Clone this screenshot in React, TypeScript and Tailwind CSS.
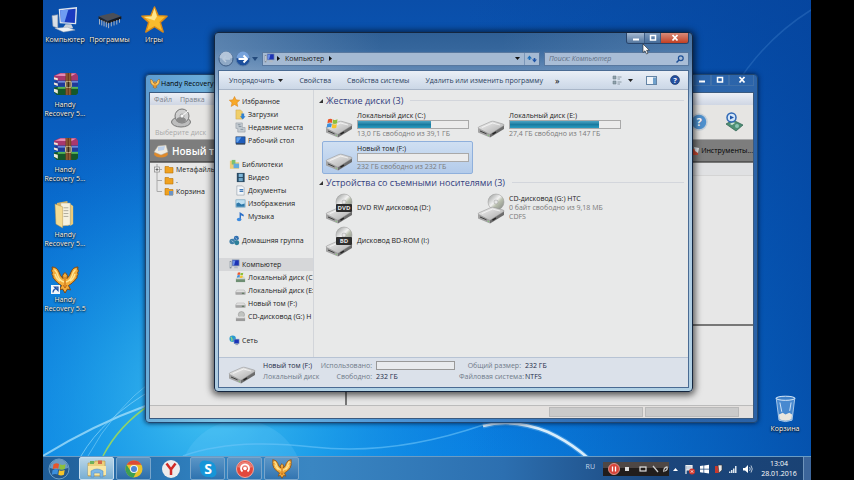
import React, { useState } from 'react';

const favorites = [
  { name: 'Избранное', icon: 'star', root: true },
  { name: 'Загрузки', icon: 'downloads' },
  { name: 'Недавние места', icon: 'recent' },
  { name: 'Рабочий стол', icon: 'desktop' },
];

const libraries = [
  { name: 'Библиотеки', icon: 'library', root: true },
  { name: 'Видео', icon: 'video' },
  { name: 'Документы', icon: 'document' },
  { name: 'Изображения', icon: 'image' },
  { name: 'Музыка', icon: 'music' },
];

const computer = [
  { name: 'Компьютер', icon: 'computer', root: true, active: true },
  { name: 'Локальный диск (C', icon: 'sysdrive' },
  { name: 'Локальный диск (E:', icon: 'drive' },
  { name: 'Новый том (F:)', icon: 'drive' },
  { name: 'CD-дисковод (G:) H', icon: 'cd' },
];

const navGroups = [
  favorites,
  libraries,
  [{ name: 'Домашняя группа', icon: 'homegroup', root: true }],
  computer,
  [{ name: 'Сеть', icon: 'network', root: true }],
];

const hardDisks = [
  { name: 'Локальный диск (C:)', used: 66, info: '13,0 ГБ свободно из 39,1 ГБ', system: true },
  { name: 'Локальный диск (E:)', used: 81, info: '27,4 ГБ свободно из 147 ГБ' },
  { name: 'Новый том (F:)', used: 0, info: '232 ГБ свободно из 232 ГБ' },
];

const removable = [
  { name: 'DVD RW дисковод (D:)', disc: 'DVD' },
  { name: 'CD-дисковод (G:) HTC', disc: ' ', info: '0 байт свободно из 9,18 МБ', fs: 'CDFS' },
  { name: 'Дисковод BD-ROM (I:)', disc: 'BD' },
];

function Flag() {
  return (
    <g>
      <path d="M0 1.5Q2.5 0 4.6 1.2L4 5.2Q2 4.2-.6 5.6Z" fill="#e8552a" />
      <path d="M5.3 1.5Q7.5 2.6 10 1.4L9.4 5.4Q7 6.6 4.7 5.5Z" fill="#8cc03c" />
      <path d="M-.8 6.4Q1.8 5 3.9 6.1L3.3 10Q1.2 9-1.4 10.3Z" fill="#3c8fdc" />
      <path d="M4.6 6.4Q7 7.5 9.3 6.3L8.7 10.2Q6.400 11.400 4 10.300Z" fill="#f7c52b" />
    </g>
  );
}

function DriveIcon({ system, disc }: { system?: boolean; disc?: string }) {
  return (
    <svg viewBox="0 0 30 32" className="h-8 w-[30px] shrink-0" aria-hidden="true">
      <defs>
        <linearGradient id="driveTop" x1="0" y1="0" x2="1" y2="1">
          <stop offset="0" stopColor="#f4f4f4" />
          <stop offset="1" stopColor="#a9a9a9" />
        </linearGradient>
        <linearGradient id="discFace" x1="0" y1="0" x2="1" y2="1">
          <stop offset="0" stopColor="#8f9290" />
          <stop offset=".45" stopColor="#f2f2f2" />
          <stop offset=".6" stopColor="#b9bfae" />
          <stop offset="1" stopColor="#7f8280" />
        </linearGradient>
      </defs>
      {disc && (
        <g>
          <circle cx="20" cy="10" r="8" fill="url(#discFace)" stroke="#989898" strokeWidth=".5" />
          <circle cx="20" cy="10" r="2" fill="#e6e6e6" stroke="#888" strokeWidth=".4" />
        </g>
      )}
      <path d="M2 22L14 27.500V31.500L2 26.500Z" fill="#a3a3a3" />
      <path d="M14 27.500L28 19V23L14 31.500Z" fill="#6c6c6c" />
      <path d="M2 22Q2 21.300 3 20.800L15 15.500Q16.500 15 18 15.400L27 18Q28.500 18.600 28 19.500L14.500 28Q14 28.300 13 28Z" fill="url(#driveTop)" stroke="#8b8b8b" strokeWidth=".5" />
      <path d="M6 21.500L16.500 17L24 19" fill="none" stroke="#fff" strokeWidth=".8" opacity=".8" />
      <path d="M4 25L10.500 27.800" stroke="#3f3f3f" strokeWidth="1" />
      <path d="M16.500 28.200L20 26" stroke="#222" strokeWidth="1.400" />
      <circle cx="12.300" cy="29.300" r=".6" fill="#7fd070" />
      {system && <g transform="translate(4 12) scale(.95)"><Flag /></g>}
      {disc && disc !== ' ' && (
        <g>
          <rect x="12" y="12" width="16" height="8" rx="1" fill="#2d2d2d" />
          <text x="20" y="18.300" textAnchor="middle" fontSize="6" fontWeight="700" fill="#e6e6e6">{disc}</text>
        </g>
      )}
    </svg>
  );
}

function NavIcon({ name }: { name: string }) {
  return (
    <svg viewBox="0 0 12 12" className="h-[11px] w-[11px] shrink-0" aria-hidden="true">
      {name === 'star' && <path d="M6 .5L7.700 4.200L11.700 4.600L8.700 7.400L9.600 11.400L6 9.300L2.400 11.400L3.300 7.400L.3 4.600L4.300 4.200Z" fill="#f8a928" stroke="#d9821a" strokeWidth=".6" />}
      {name === 'downloads' && <g><path d="M1 1H6L8 3V11H1Z" fill="#f0cf6a" stroke="#c8a040" strokeWidth=".5" /><path d="M7 5H10V8H11.500L8.500 11.500L5.500 8H7Z" fill="#2f7fd0" /></g>}
      {name === 'recent' && <g><path d="M1 1H8V6H11V11H3V7H1Z" fill="#c5ccd2" stroke="#8d979f" strokeWidth=".6" /><path d="M3 3H6M4 5H7M6 8H9" stroke="#6f7f8c" strokeWidth=".8" /></g>}
      {name === 'desktop' && <g><rect x="1" y="2" width="10" height="7.500" fill="#1f5dbd" stroke="#10305f" strokeWidth=".6" /><path d="M1.500 2.500H7L3 8H1.500Z" fill="#5fa0ea" /><rect x="1" y="9" width="10" height="1.500" fill="#35465c" /></g>}
      {name === 'library' && <g><path d="M1 2H5L6 3.500H11V10.500H1Z" fill="#eccc76" /><rect x="3" y="1" width="4" height="5" fill="#7cc06e" /><rect x="5" y="5" width="6" height="5" fill="#62aadd" /></g>}
      {name === 'video' && <g><rect x="2" y="1" width="8.500" height="10" fill="#294a63" /><rect x="4" y="2" width="4.500" height="3.500" fill="#7eb6d8" /><rect x="4" y="6.500" width="4.500" height="3.500" fill="#6fa7c9" /></g>}
      {name === 'document' && <g><path d="M2 1H8L10 3V11H2Z" fill="#f2f5f8" stroke="#8a97a5" strokeWidth=".6" /><path d="M5 5H9M5 7H9" stroke="#447dbb" strokeWidth="1.200" /></g>}
      {name === 'image' && <g><rect x="1" y="2" width="10" height="8" fill="#bfe0f2" stroke="#5e95b5" strokeWidth=".6" /><path d="M1.500 9.500V6L4 5L7 7L10.500 6V9.500Z" fill="#2d77a8" /></g>}
      {name === 'music' && <g><path d="M5 9V1L9.500 4V6L6.500 4.500V9.500Z" fill="#2a6fc8" /><ellipse cx="4.500" cy="9.300" rx="2.500" ry="1.900" fill="#3c8be0" /></g>}
      {name === 'homegroup' && <g><circle cx="3.500" cy="7" r="3" fill="#3f7fa8" /><circle cx="8" cy="3.500" r="2.700" fill="#2f6fb0" /><circle cx="8.500" cy="8.500" r="2.700" fill="#2d7f9a" /><path d="M3 6L5 8M7 3L9 5" stroke="#cfe4f0" strokeWidth=".8" /></g>}
      {name === 'computer' && <g><rect x="3.500" y="1" width="7.500" height="6.500" fill="#1c33b5" stroke="#8495aa" strokeWidth=".7" /><path d="M4 1.500H7L5.500 7H4Z" fill="#6a8fe6" /><path d="M6 8H9L10 10H5.500Z" fill="#b0b8c2" /><rect x="1" y="3" width="2" height="7" fill="#c2cad3" stroke="#7d8894" strokeWidth=".4" /></g>}
      {name === 'sysdrive' && <g><path d="M1 7H11V11H1Z" fill="#6f8f74" /><path d="M2 5H10L11 8H1Z" fill="#cfd5d0" /><g transform="translate(3 0) scale(.6)"><Flag /></g></g>}
      {name === 'drive' && <g><path d="M2 5.500H10L11.500 8H.5Z" fill="#e4e4e4" stroke="#999" strokeWidth=".4" /><rect x=".5" y="7.800" width="11" height="2.700" rx=".5" fill="#a5a5a5" /><rect x="7.500" y="8.500" width="2.500" height="1" fill="#4d6e4d" /></g>}
      {name === 'cd' && <g><circle cx="7" cy="4" r="3.400" fill="#c0c3c0" stroke="#888" strokeWidth=".5" /><path d="M1 7H11V11H1Z" fill="#9b9b9b" /><path d="M2 6H10L11 8H1Z" fill="#dedede" /></g>}
      {name === 'network' && <g><circle cx="4" cy="4" r="3.500" fill="#2a9ad0" /><path d="M2 2Q4 4 3 7" stroke="#a6e070" strokeWidth="1.200" fill="none" /><rect x="5.500" y="4.500" width="5.500" height="5" fill="#1a35b8" stroke="#8fa3c0" strokeWidth=".6" /><path d="M7 10H10V11H7Z" fill="#8894a4" /></g>}
    </svg>
  );
}

function Phoenix({ className }: { className: string }) {
  return (
    <svg viewBox="0 0 28 28" className={className} aria-hidden="true">
      <path d="M1 1Q6 1 8 6Q9 10 12 12.500Q11 9 12.500 8L14 6.500L15.500 8Q17 9 16 12.500Q19 10 20 6Q22 1 27 1Q26 3 27.500 5Q26 6 27 8.500Q25.500 9.500 26 12Q24 13 23.500 15Q21.500 16 20 18Q18.500 18.500 17.500 19.500L19.500 24L16.500 23L14 27L11.500 23L8.500 24L10.500 19.500Q9.500 18.500 8 18Q6.500 16 4.500 15Q4 13 2 12Q2.500 9.500 1 8.500Q2 6 .5 5Q2 3 1 1Z" fill="#f3ad3c" stroke="#84480f" strokeWidth="1" />
      <path d="M3.500 3.500Q6 6 7 10Q8.500 14.500 13 16M24.500 3.500Q22 6 21 10Q19.500 14.500 15 16M4 8Q5.500 13 9 15M24 8Q22.500 13 19 15" stroke="#ffe593" strokeWidth="1.500" fill="none" />
      <path d="M14 11V22M12 19L14 22L16 19" stroke="#c56a14" strokeWidth="1" fill="none" />
    </svg>
  );
}

function RarIcon() {
  return (
    <svg viewBox="0 0 28 26" className="h-[25px] w-[27px]" aria-hidden="true">
      <path d="M2 4L8 1H25L27 4V9H6L2 8Z" fill="#a8386e" />
      <path d="M3 4L9 1.500H25L20 4.500Z" fill="#e48bb4" />
      <path d="M2 10L6 9H27V15H6L2 14Z" fill="#203a98" />
      <path d="M6 9.500H27V11H6Z" fill="#7794e0" />
      <path d="M2 16L6 15.500H27V22L25 24H5L2 21Z" fill="#14582a" />
      <path d="M6 15.500H27V17.500H6Z" fill="#57b455" />
      <path d="M2 5.500L6 6.500V8.500L2 7.500ZM2 11L6 12V14.500L2 13ZM2 17.500L6 18.500V22.500L2 20.500Z" fill="#efe9da" />
      <path d="M14 1H20V24H14Z" fill="#6e3d20" />
      <path d="M15.500 1V24M18.500 1V24" stroke="#a87848" strokeWidth=".8" />
      <rect x="14" y="10" width="6" height="6" rx="1" fill="#7b6c54" stroke="#d3c294" strokeWidth="1" />
      <path d="M17 10V16" stroke="#3f2a15" strokeWidth="1.500" />
    </svg>
  );
}

function ComputerIcon() {
  return (
    <svg viewBox="0 0 30 28" className="h-[27px] w-[29px]" aria-hidden="true">
      <path d="M1 10L7 9V23L2 21Z" fill="#d9dfe6" stroke="#8f9bab" strokeWidth=".6" />
      <path d="M8 3L27 1L26 19L9 18Z" fill="#dfe6ee" />
      <path d="M9.500 4.500L25.500 2.800L24.700 17.500L10.300 16.500Z" fill="#1a3bc0" />
      <path d="M9.500 4.500L18 3.600L14 16.800L10.300 16.500Z" fill="#6f9cf2" />
      <path d="M15 19H21L23 23H12Z" fill="#c9d1da" />
      <path d="M4 23L17 22L25 25L13 27Z" fill="#eef2f6" stroke="#96a3b2" strokeWidth=".5" />
    </svg>
  );
}

function ChipIcon() {
  return (
    <svg viewBox="0 0 28 22" className="h-[20px] w-[27px]" aria-hidden="true">
      <path d="M2 7L18 3L27 7L12 12Z" fill="#4b4f57" />
      <path d="M2 7L12 12V15L2 10Z" fill="#23262b" />
      <path d="M12 12L27 7V10L12 15Z" fill="#17191d" />
      <path d="M3 10V16M5.500 11V17M8 12V18M10.500 13V19M13 14V20M16 13V18M19 12V17M22 11V16M25 10V14" stroke="#b5bcc6" strokeWidth="1" />
    </svg>
  );
}

function StarIcon() {
  return (
    <svg viewBox="0 0 30 30" className="h-[29px] w-[29px]" aria-hidden="true">
      <path d="M15 2L18.800 11L28 11.500L21 18L24 28L15 22.500L6 28L9 18L2 11.500L11.200 11Z" fill="#f9bb2d" stroke="#d98a18" strokeWidth="1.500" strokeLinejoin="round" />
      <path d="M15 3L17.500 12L15 16L4 12.500L12 12Z" fill="#ffe68c" />
    </svg>
  );
}

function FolderIcon() {
  return (
    <svg viewBox="0 0 24 30" className="h-[29px] w-[23px]" aria-hidden="true">
      <path d="M3 3L14 1L15 27L4 25Z" fill="#d9b565" />
      <path d="M7 3L17 3V26L8 27Z" fill="#f6f1df" stroke="#b3a172" strokeWidth=".5" />
      <path d="M10 8H15M10 11H15M10 14H15M10 17H15" stroke="#8d8a7d" strokeWidth=".7" />
      <path d="M1 4L9 7V29L2 25Z" fill="#f4dc94" stroke="#b8934a" strokeWidth=".5" />
      <path d="M17 4L20 6V25L17 27Z" fill="#ecca78" />
    </svg>
  );
}

function BinIcon() {
  return (
    <svg viewBox="0 0 24 30" className="h-[28px] w-[23px]" aria-hidden="true">
      <path d="M2 3H22L19 27Q12 30 5 27Z" fill="#7fb4ea" fillOpacity=".55" stroke="#cfe3f6" strokeWidth=".8" />
      <ellipse cx="12" cy="3.500" rx="10" ry="2.200" fill="#3c7fc8" stroke="#e4f0fb" strokeWidth="1" />
      <path d="M5 21L9 19L12 21L16 19L19 21L18.500 26Q12 29 5.500 26Z" fill="#e9e6de" />
      <path d="M6 8L8 18M18 8L16.500 17" stroke="#d6e8fa" strokeWidth="1" />
    </svg>
  );
}

function Shortcut({ label, children }: { label: string; children: React.ReactNode }) {
  return (
    <button type="button" className="flex w-full flex-col items-center text-center text-white">
      <span className="flex h-[31px] items-center justify-center">{children}</span>
      <span className="text-[7px] leading-[9px] [text-shadow:0_1px_2px_#000,0_0_1px_#000]">{label}</span>
    </button>
  );
}

function Wallpaper() {
  return (
    <svg viewBox="0 0 768 480" preserveAspectRatio="none" className="absolute inset-0 h-full w-full" aria-hidden="true">
      <defs>
        <linearGradient id="sky" x1="0" y1="0" x2="0" y2="1">
          <stop offset="0" stopColor="#0a4ea9" />
          <stop offset=".45" stopColor="#0868cd" />
          <stop offset="1" stopColor="#0a84e6" />
        </linearGradient>
        <radialGradient id="glow" cx="170" cy="400" r="300" gradientUnits="userSpaceOnUse">
          <stop offset="0" stopColor="#4fd0f4" stopOpacity=".85" />
          <stop offset=".4" stopColor="#27aeec" stopOpacity=".6" />
          <stop offset="1" stopColor="#0a80dd" stopOpacity="0" />
        </radialGradient>
        <linearGradient id="shade" x1="0" y1="0" x2="1" y2="0">
          <stop offset=".55" stopColor="#04489f" stopOpacity="0" />
          <stop offset="1" stopColor="#04439c" stopOpacity=".75" />
        </linearGradient>
      </defs>
      <rect width="768" height="480" fill="url(#sky)" />
      <rect width="768" height="480" fill="url(#glow)" />
      <rect width="768" height="480" fill="url(#shade)" />
      <circle cx="198" cy="482" r="62" fill="#7fd4ff" opacity=".18" />
      <path d="M0 456Q50 425 105 405T200 340" stroke="#a9e2fb" strokeWidth="2" fill="none" opacity=".75" />
      <path d="M38 456Q60 418 112 388" stroke="#7fd0f7" strokeWidth="1" fill="none" opacity=".8" />
      <path d="M45 456Q70 410 110 380" stroke="#7fd0f7" strokeWidth="1" fill="none" opacity=".6" />
      <path d="M60 456Q76 425 108 404" stroke="#8fd36a" strokeWidth="1.500" fill="none" />
      <path d="M140 456Q190 438 270 447T440 425" stroke="#6cc4f8" strokeWidth="1.500" fill="none" opacity=".6" />
      <path d="M440 426Q470 418 505 432Q545 450 572 490" stroke="#7cc4f6" strokeWidth="5" fill="none" opacity=".4" />
      <path d="M440 426Q470 418 505 432Q540 448 566 480" stroke="#eaf7ff" strokeWidth="2.500" fill="none" opacity=".9" />
      <path d="M768 10Q720 40 690 90" stroke="#5c9ae0" strokeWidth="1.500" fill="none" opacity=".25" />
    </svg>
  );
}

function RecoveryWindow() {
  return (
    <section className="absolute bottom-[33px] left-[102px] right-[53px] top-[74px] flex flex-col rounded-[4px] border border-[#21466f] bg-[linear-gradient(100deg,#5c9bd0_0%,#7dc3e4_20%,#4f97d8_45%,#2c66ad_80%,#2b62a6_100%)] px-[3px] pb-[3px] text-[7px] leading-[9px] text-[#222] shadow-[0_0_5px_#001a40]">
      <header className="flex h-[17px] shrink-0 items-center gap-px pl-px">
        <Phoenix className="h-[10px] w-[10px]" />
        <h2 className="flex-1 text-black">Handy Recovery</h2>
        <div className="flex h-full items-start text-white">
          {['min', 'max', 'close'].map((b) => (
            <button key={b} type="button" aria-label={b} className="flex h-[11px] w-[18px] items-center justify-center border-x border-b border-[#3f70aa] last:w-[25px]">
              <ControlGlyph name={b} />
            </button>
          ))}
        </div>
      </header>
      <div className="flex min-h-0 flex-1 flex-col border border-[#3a5a80] bg-[#e7e7e7]">
        <nav className="flex h-3 shrink-0 items-center gap-2 bg-linear-to-b from-[#eceff6] to-[#cfd6e4] px-1 text-[#7b7f88]">
          <button type="button">Файл</button>
          <button type="button">Правка</button>
        </nav>
        <div className="flex h-[35px] shrink-0 items-center justify-between border-b border-[#aaa] bg-[#e6e5e3] pl-[5px] pr-[9px]">
          <button type="button" className="flex flex-col items-center text-[#a9a9a9]">
            <svg viewBox="0 0 22 20" className="h-5 w-[22px]" aria-hidden="true">
              <ellipse cx="11" cy="14" rx="9.500" ry="5" fill="#bdbdbd" stroke="#777" />
              <circle cx="12" cy="8" r="7" fill="#cfcfcf" stroke="#777" />
              <ellipse cx="11" cy="12" rx="5" ry="3" fill="#8a8a8a" />
              <circle cx="12" cy="8" r="2" fill="#f5f5f5" stroke="#777" strokeWidth=".6" />
              <path d="M12 8L18 3" stroke="#fff" />
            </svg>
            Выберите диск
          </button>
          <div className="flex items-center gap-4">
            <button type="button" aria-label="Справка">
              <svg viewBox="0 0 18 18" className="h-[18px] w-[18px]" aria-hidden="true">
                <circle cx="9" cy="9" r="8" fill="#4f90cd" stroke="#c6cfd8" strokeWidth="1.500" />
                <text x="9" y="13" textAnchor="middle" fontSize="11" fontWeight="700" fill="#fff">?</text>
              </svg>
            </button>
            <button type="button" aria-label="Обновление">
              <svg viewBox="0 0 20 20" className="h-[20px] w-[20px]" aria-hidden="true">
                <path d="M2 12L9 8L19 13L12 19Z" fill="#4e8f73" stroke="#2b5e50" strokeWidth=".7" />
                <path d="M6 12L9 10L11 11L8 13Z" fill="#d2e6d8" />
                <circle cx="13" cy="14" r="2" fill="#8cc5b5" />
                <circle cx="7.500" cy="5.500" r="4.500" fill="#d3e5f8" stroke="#3068b5" strokeWidth="1.500" />
                <path d="M6 3.500L10 5.500L6 7.500Z" fill="#1f55a8" />
              </svg>
            </button>
          </div>
        </div>
        <div className="flex h-[22px] shrink-0 items-center justify-between border-b border-[#555] bg-[#7d7d7d] pl-[3px]">
          <span className="flex items-center gap-[3px] text-[10px] leading-[14px] font-semibold text-white">
            <svg viewBox="0 0 16 14" className="h-[14px] w-4" aria-hidden="true">
              <ellipse cx="8" cy="10" rx="7" ry="3.500" fill="#e08a2a" />
              <path d="M1 8L5 2L13 1L15 8L8 11Z" fill="#eeeae0" stroke="#a9a294" strokeWidth=".5" />
              <path d="M5 3L12 2L11 6L5 7Z" fill="#bcd0ea" />
            </svg>
            Новый том (F:)
          </span>
          <button type="button" className="flex items-center text-black">
            <svg viewBox="0 0 10 10" className="h-[10px] w-[10px]" aria-hidden="true">
              <rect x="1" y="3" width="6" height="6" fill="#cf4a33" />
              <path d="M3 1L8 2L7 7L4 5Z" fill="#e9edf3" />
            </svg>
            Инструменты...
          </button>
        </div>
        <div className="flex min-h-0 flex-1 border-t border-[#777]">
          <ul className="w-[197px] shrink-0 border-r-2 border-[#777] pl-1 pt-px">
            {['Метафайлы', '.', 'Корзина'].map((item, i) => (
              <li key={item} className="flex h-[11px] items-center gap-[2px]">
                <svg viewBox="0 0 8 11" className="h-[11px] w-2" aria-hidden="true">
                  <path d={i === 2 ? 'M3 0V5.500H8' : 'M3 0V11M3 5.500H8'} stroke="#aaa" strokeWidth="1" fill="none" />
                  {i === 0 && <g><rect x=".5" y="3" width="5" height="5" fill="#eee" stroke="#888" strokeWidth=".7" /><path d="M1.500 5.500H4.500M3 4V7" stroke="#444" strokeWidth=".7" /></g>}
                </svg>
                <svg viewBox="0 0 10 9" className="h-[9px] w-[10px]" aria-hidden="true">
                  <path d="M1 1.500H4.500L5.500 2.500H9V8H1Z" fill="#f0a11e" stroke="#b8730c" strokeWidth=".6" />
                  {i === 2 && <rect x="5" y="4" width="4" height="4.500" fill="#6c93c4" />}
                </svg>
                {item}
              </li>
            ))}
          </ul>
          <div className="flex flex-1 flex-col">
            <div className="h-[13px] border-b border-[#d4d4d4] bg-[#e0e1e3]" />
            <div className="h-[150px] border-b-2 border-[#777]" />
          </div>
        </div>
        <footer className="flex h-[13px] shrink-0 items-center justify-end gap-[2px] border-t border-[#bbb] bg-[#e3e0de] pr-[14px]">
          <span className="h-[10px] w-[94px] border border-[#b9b9b9] bg-[#cacaca]" />
          <span className="h-[10px] w-[94px] border border-[#b9b9b9] bg-[#cacaca]" />
        </footer>
      </div>
    </section>
  );
}

function ControlGlyph({ name }: { name: string }) {
  return (
    <svg viewBox="0 0 8 8" className="h-2 w-2" fill="none" stroke="#fff" aria-hidden="true">
      {name === 'min' && <path d="M1 5.500H7" strokeWidth="2" />}
      {name === 'max' && <rect x="1.500" y="1.500" width="5" height="4.500" strokeWidth="1.500" />}
      {name === 'close' && <path d="M1.500 1L6.500 6.500M6.500 1L1.500 6.500" strokeWidth="1.800" />}
    </svg>
  );
}

function GroupTitle({ children }: { children: React.ReactNode }) {
  return (
    <h3 className="flex h-[15px] items-center gap-[3px] text-[9px] leading-[15px] text-[#34417f]">
      <svg viewBox="0 0 5 5" className="-ml-[3px] h-1 w-1" aria-hidden="true"><path d="M5 0V5H0Z" fill="#333" /></svg>
      {children}
      <span className="ml-1 h-px flex-1 bg-[#d3d6dc]" />
    </h3>
  );
}

function Tile({ item, selected, onSelect }) {
  const tileClass = selected
    ? 'border-[#8fb0dc] bg-linear-to-b from-[#cfdff2] to-[#b3cbea]'
    : 'border-transparent';
  return (
    <button type="button" onClick={onSelect} className={`flex h-[33px] w-[151px] items-center gap-[3px] rounded-[2px] border pl-px text-left ${tileClass}`}>
      <span className={item.disc ? '' : '-mt-[5px]'}>
        <DriveIcon system={item.system} disc={item.disc} />
      </span>
      <span className="min-w-0 whitespace-nowrap">
        <span className="block text-[#222]">{item.name}</span>
        {item.used !== undefined && (
          <span className="block h-[9px] w-[112px] border border-[#a9a9a9] bg-[#ececec]">
            <span className="block h-full bg-linear-to-b from-[#4aa5c4] via-[#1a7ba0] to-[#2b9cc0]" style={{ width: `${item.used}%` }} />
          </span>
        )}
        {item.info && <span className="block text-[#7a7a7a]">{item.info}</span>}
        {item.fs && <span className="block text-[#7a7a7a]">{item.fs}</span>}
      </span>
    </button>
  );
}

function ExplorerWindow() {
  const [selected, setSelected] = useState('Новый том (F:)');
  const [query, setQuery] = useState('');

  return (
    <section className="absolute bottom-[64px] left-[171px] right-[118px] top-[32px] flex flex-col rounded-[4px] border border-[#14263f] bg-[linear-gradient(90deg,#a9c0d855_0%,#1b4f8a00_35%,#1b4f8a00_60%,#a9c0d833_100%),linear-gradient(180deg,#2f5f95_0px,#35669c_16px,#6289b5_38px,#a7c6e2_70px,#b2d3e6_100%)] px-[3px] pb-[3px] text-[7px] leading-[9px] shadow-[0_1px_7px_2px_#000a]">
      <header className="flex h-[15px] shrink-0 justify-end">
        <div className="flex h-[11px] overflow-hidden rounded-b-[3px] border border-t-0 border-[#29446a]">
          <button type="button" aria-label="Свернуть" className="flex w-[17px] items-center justify-center bg-linear-to-b from-[#a4b8d0] to-[#54779f]"><ControlGlyph name="min" /></button>
          <button type="button" aria-label="Развернуть" className="flex w-[17px] items-center justify-center border-x border-[#3c5c85] bg-linear-to-b from-[#7c99bc] to-[#456c9a]"><ControlGlyph name="max" /></button>
          <button type="button" aria-label="Закрыть" className="flex w-[27px] items-center justify-center bg-linear-to-b from-[#d88a78] to-[#c23e20]"><ControlGlyph name="close" /></button>
        </div>
      </header>
      <div className="flex h-[22px] shrink-0 items-center gap-1 pb-px">
        <div className="flex items-center gap-px">
          <button type="button" aria-label="Назад">
            <svg viewBox="0 0 16 16" className="h-4 w-4" aria-hidden="true">
              <circle cx="8" cy="8" r="7" fill="#8fa9c6" stroke="#3d5c84" />
              <path d="M1.500 7Q8 9 14.500 7A6.500 6.500 0 0 0 1.500 7Z" fill="#b3c5da" />
              <path d="M12 8H5M8 5L5 8L8 11" stroke="#b9cadd" strokeWidth="1.500" fill="none" />
            </svg>
          </button>
          <button type="button" aria-label="Вперёд">
            <svg viewBox="0 0 16 16" className="h-4 w-4" aria-hidden="true">
              <circle cx="8" cy="8" r="7" fill="#1c4f9c" stroke="#5c7ea8" />
              <path d="M1.500 7Q8 9 14.500 7A6.500 6.500 0 0 0 1.500 7Z" fill="#77a3dc" />
              <path d="M3.500 8H12M8.500 4.500L12 8L8.500 11.500" stroke="#fff" strokeWidth="2" fill="none" />
            </svg>
          </button>
          <svg viewBox="0 0 6 4" className="h-1 w-[6px]" aria-hidden="true"><path d="M0 0H6L3 4Z" fill="#234a7c" /></svg>
        </div>
        <div className="flex h-[14px] flex-1 items-center border border-[#58789f] bg-[#a5bad3] pl-px text-[#1b1b1b]">
          <NavIcon name="computer" />
          <button type="button" className="flex flex-1 items-center gap-[5px] pl-[2px]">
            <Arrow /> Компьютер <Arrow />
          </button>
          <button type="button" aria-label="Предыдущие расположения" className="px-1">
            <svg viewBox="0 0 5 3" className="h-[3px] w-[5px]" aria-hidden="true"><path d="M0 0H5L2.500 3Z" fill="#111" /></svg>
          </button>
          <button type="button" aria-label="Обновить" className="flex h-full w-[15px] items-center justify-center border-l border-[#7b97b9]">
            <svg viewBox="0 0 10 8" className="h-2 w-[10px]" aria-hidden="true">
              <path d="M0 3.500L2.500 .5L5 3.500H3.300V5H1.700V3.500Z" fill="#1f6fb8" />
              <path d="M5 4.500H6.700V3H8.300V4.500H10L7.500 7.500Z" fill="#1f55a8" />
            </svg>
          </button>
        </div>
        <label className="flex h-[14px] w-[145px] items-center border border-[#58789f] bg-[#a9bdd6] px-1">
          <input
            type="text"
            name="search"
            aria-label="Поиск"
            placeholder="Поиск: Компьютер"
            value={query}
            onChange={(event) => setQuery(event.target.value)}
            className="min-w-0 flex-1 bg-transparent italic outline-none placeholder:text-[#5f6f84]"
          />
          <svg viewBox="0 0 8 8" className="h-2 w-2" fill="none" stroke="#1d4f96" aria-hidden="true">
            <circle cx="4.800" cy="3.200" r="2.400" strokeWidth="1.200" />
            <path d="M3 5L.5 7.500" strokeWidth="1.500" />
          </svg>
        </label>
      </div>
      <div className="flex min-h-0 flex-1 flex-col border border-[#4a6b93] bg-[#e8e9e9]">
        <div className="flex h-[19px] shrink-0 items-center border-b border-[#a9b6c8] bg-linear-to-b from-[#eaeff6] via-[#dae3ef] to-[#cbd7e6] pl-[10px] pr-2 text-[#2b3f60]">
          <button type="button" className="flex items-center gap-1">
            Упорядочить
            <svg viewBox="0 0 5 3" className="h-[3px] w-[5px]" aria-hidden="true"><path d="M0 0H5L2.500 3Z" fill="#222" /></svg>
          </button>
          <button type="button" className="ml-4">Свойства</button>
          <button type="button" className="ml-4">Свойства системы</button>
          <button type="button" className="ml-4">Удалить или изменить программу</button>
          <button type="button" aria-label="Ещё" className="ml-3 text-[9px] text-black">»</button>
          <div className="ml-auto flex items-center gap-[13px]">
            <button type="button" aria-label="Изменить представление" className="flex items-center gap-[6px]">
              <svg viewBox="0 0 10 10" className="h-[10px] w-[10px]" aria-hidden="true">
                <path d="M1 1H4V4H1ZM1 6H4V9H1Z" fill="#8fa2ad" stroke="#65757f" strokeWidth=".5" />
                <path d="M5.500 2H9.500M5.500 4H8M5.500 7H9.500M5.500 9H8" stroke="#7b8a94" strokeWidth=".8" />
              </svg>
              <svg viewBox="0 0 5 3" className="h-[3px] w-[5px]" aria-hidden="true"><path d="M0 0H5L2.500 3Z" fill="#222" /></svg>
            </button>
            <button type="button" aria-label="Область просмотра">
              <svg viewBox="0 0 11 9" className="h-[9px] w-[11px]" aria-hidden="true">
                <rect x=".5" y=".5" width="10" height="8" fill="#eff4f9" stroke="#6484a5" />
                <rect x="7" y="1.500" width="3" height="6.500" fill="#6fa0cb" />
              </svg>
            </button>
            <button type="button" aria-label="Справка">
              <svg viewBox="0 0 10 10" className="h-[10px] w-[10px]" aria-hidden="true">
                <circle cx="5" cy="5" r="4.500" fill="#244f9f" stroke="#14305f" strokeWidth=".6" />
                <text x="5" y="7.700" textAnchor="middle" fontSize="7.500" fontWeight="700" fill="#fff">?</text>
              </svg>
            </button>
          </div>
        </div>
        <div className="flex min-h-0 flex-1">
          <nav className="flex w-[95px] shrink-0 flex-col gap-[11px] overflow-hidden border-r border-[#d2d5da] pt-[5px] text-[#222]">
            {navGroups.map((group) => (
              <ul key={group[0].name}>
                {group.map((item: any) => (
                  <li key={item.name}>
                    <a
                      href="#"
                      className={`flex h-[13px] items-center gap-[2px] whitespace-nowrap ${item.root ? 'pl-[10px]' : 'pl-4'} ${item.active ? 'bg-[#d6d7d9]' : ''}`}
                    >
                      <NavIcon name={item.icon} />
                      {item.name}
                    </a>
                  </li>
                ))}
              </ul>
            ))}
          </nav>
          <main className="flex min-w-0 flex-1 flex-col gap-px pl-2 pr-1 pt-[3px]">
            <GroupTitle>Жесткие диски (3)</GroupTitle>
            <div className="-mt-px grid grid-cols-[152px_152px]">
              {hardDisks.map((d) => (
                <Tile key={d.name} item={d} selected={selected === d.name} onSelect={() => setSelected(d.name)} />
              ))}
            </div>
            <GroupTitle>Устройства со съемными носителями (3)</GroupTitle>
            <div className="grid grid-cols-[152px_152px]">
              {removable.map((d) => (
                <Tile key={d.name} item={d} selected={selected === d.name} onSelect={() => setSelected(d.name)} />
              ))}
            </div>
          </main>
        </div>
        <footer className="flex h-[30px] shrink-0 items-start gap-[6px] border-t border-[#b7c3d4] bg-[#dbe1ea] pl-2">
          <span className="-mt-[6px]">
            <DriveIcon />
          </span>
          <dl className="grid grid-cols-[50px_55px_79px_62px_auto] items-center gap-x-1 gap-y-[2px] whitespace-nowrap pt-[3px] text-[#6f7a89]">
            <dt className="text-[#1d2c48]">Новый том (F:)</dt>
            <dt className="text-right">Использовано:</dt>
            <dd className="h-[9px] border border-[#999] bg-[#e9ebee]" />
            <dt className="text-right">Общий размер:</dt>
            <dd className="text-[#1d2c48]">232 ГБ</dd>
            <dd>Локальный диск</dd>
            <dt className="text-right">Свободно:</dt>
            <dd className="text-[#1d2c48]">232 ГБ</dd>
            <dt className="text-right">Файловая система:</dt>
            <dd className="text-[#1d2c48]">NTFS</dd>
          </dl>
        </footer>
      </div>
    </section>
  );
}

function Arrow() {
  return (
    <svg viewBox="0 0 3 5" className="h-[5px] w-[3px]" aria-hidden="true">
      <path d="M0 0L3 2.500L0 5Z" fill="#111" />
    </svg>
  );
}

function TaskIcon({ name }: { name: string }) {
  if (name === 'Handy Recovery') return <Phoenix className="h-5 w-5" />;
  return (
    <svg viewBox="0 0 20 20" className="h-5 w-5" aria-hidden="true">
      {name === 'Проводник' && <g><path d="M1 4H7L8 2H18V17H1Z" fill="#ecd07c" stroke="#b89440" strokeWidth=".6" /><path d="M3 2H7V5H3Z" fill="#6fb15b" /><path d="M11 1.500H15V5H11Z" fill="#d46a4a" /><path d="M1 7H19V16H1Z" fill="#f8e6a4" /><path d="M4 18V12Q10 8 16 12V18H13V14H7V18Z" fill="#7db8e6" stroke="#4a85bd" strokeWidth=".5" /></g>}
      {name === 'Chrome' && <g><circle cx="10" cy="10" r="8.500" fill="#e8c22c" /><path d="M2.600 5.800A8.500 8.500 0 0 1 17.400 5.800H10Z" fill="#dc4a38" /><path d="M2.600 5.800A8.500 8.500 0 0 0 9.500 18.500L13 11.500L10 10L6.500 12Z" fill="#3c9f52" /><circle cx="10" cy="10" r="4" fill="#f2f2f2" /><circle cx="10" cy="10" r="3" fill="#4a86d8" /></g>}
      {name === 'Яндекс' && <g><circle cx="10" cy="10" r="9" fill="#ececec" /><path d="M5.500 4.500L10 10.500L14.500 4.500M10 10V16" stroke="#d02a26" strokeWidth="2.500" fill="none" /></g>}
      {name === 'Skype' && <g><circle cx="6.500" cy="6.500" r="5" fill="#1696d8" /><circle cx="13.500" cy="13.500" r="5" fill="#1696d8" /><circle cx="10" cy="10" r="8" fill="#1696d8" /><text x="10" y="15" textAnchor="middle" fontSize="14" fontWeight="700" fill="#fff">S</text></g>}
      {name === 'Запись' && <g><circle cx="10" cy="10" r="8.500" fill="#e2483c" stroke="#f3a79e" /><path d="M2.500 8Q10 11 17.500 8A8 8 0 0 0 2.500 8Z" fill="#f0958b" opacity=".7" /><path d="M7.500 12.500A4 4 0 1 1 12.500 12.500" fill="none" stroke="#fff" strokeWidth="1.800" /><circle cx="10" cy="9.500" r="1.800" fill="#fff" /></g>}
    </svg>
  );
}

const tasks = ['Проводник', 'Chrome', 'Яндекс', 'Skype', 'Запись', 'Handy Recovery'];

function taskClass(name: string) {
  if (name === 'Проводник') return 'border-[#c7dff0] bg-linear-to-b from-[#b9d6e8] to-[#78aed2]';
  if (name === 'Яндекс') return 'border-transparent';
  return 'border-[#78a5cb] bg-linear-to-b from-[#6d9fca]/70 to-[#2d6aa6]/60';
}

function Taskbar() {
  return (
    <footer className="relative flex h-6 shrink-0 items-center border-t border-[#6b9cc4] bg-[linear-gradient(90deg,#1f5c96_0%,#2f7fbd_20%,#3a86c2_35%,#2c6fb0_60%,#1b467c_80%,#1a4274_100%)] text-[7px] leading-[10px] text-white">
      <button type="button" aria-label="Пуск" className="ml-[5px] mr-[9px]">
        <svg viewBox="0 0 22 22" className="h-[22px] w-[22px]" aria-hidden="true">
          <circle cx="11" cy="11" r="10" fill="#24588c" stroke="#7fb0d4" strokeWidth=".8" />
          <path d="M2 10Q11 13 20 10A9 9 0 0 0 2 10Z" fill="#6c9cc4" />
          <g transform="translate(5.500 4.500) scale(1.200)"><Flag /></g>
        </svg>
      </button>
      <div className="flex gap-[2px]">
        {tasks.map((name) => (
          <button key={name} type="button" aria-label={name} className={`flex h-[23px] w-[35px] items-center justify-center rounded-[2px] border ${taskClass(name)}`}>
            <TaskIcon name={name} />
          </button>
        ))}
      </div>
      <button type="button" className="ml-auto mr-2 pb-1 text-[#c6d8ea]">RU</button>
      <svg viewBox="0 0 66 14" className="h-[14px] w-[66px]" aria-hidden="true">
        <rect width="66" height="14" fill="#211d1c" />
        <rect width="66" height="6" fill="#6c6461" opacity=".6" />
        <circle cx="11" cy="7" r="5.500" fill="#d8453a" stroke="#eea59d" strokeWidth=".8" />
        <path d="M9.500 4.500V9.500M12.500 4.500V9.500" stroke="#fff" strokeWidth="1.300" />
        <rect x="22" y="5" width="4" height="4" fill="#ddd" />
        <rect x="37" y="5" width="6" height="4" fill="none" stroke="#ddd" strokeWidth="1.200" />
        <path d="M50 4L55 10M61 10Q60 6 64 5Q65 8 62 9" stroke="#ccc" strokeWidth="1.300" fill="none" />
      </svg>
      <svg viewBox="0 0 88 12" className="ml-[3px] h-3 w-[88px]" aria-hidden="true">
        <path d="M1 8H6L3.500 5Z" fill="#fff" />
        <path d="M14 2V11M14.500 2.500H20V7H14.500" stroke="#eee" strokeWidth="1.200" fill="#ccd6e2" />
        <circle cx="20" cy="8.500" r="3" fill="#d3382c" />
        <path d="M18.800 7.300L21.200 9.700M21.200 7.300L18.800 9.700" stroke="#fff" strokeWidth=".8" />
        <path d="M28 3L31.500 2.500V5.700H28ZM32.200 2.400L37 1.800V5.700H32.200ZM28 6.400H31.500V9.700L28 9.200ZM32.200 6.400H37V10.400L32.200 9.800Z" fill="#fff" />
        <rect x="43" y="3" width="5" height="7" fill="#c8382d" />
        <path d="M46 2H50V7L47 10Z" fill="#e9e9e9" stroke="#333" strokeWidth=".6" />
        <path d="M57 10V8.500H58.500V10ZM59 10V7H60.500V10ZM61 10V5.500H62.500V10ZM63 10V3H64.500V10Z" fill="#dfe7ef" />
        <path d="M71 5H73L76 2V10L73 7.500H71Z" fill="#fff" />
        <path d="M77.500 4Q79 6 77.500 8M79 2.500Q81.500 6 79 9.500" stroke="#dfe7ef" strokeWidth=".8" fill="none" />
      </svg>
      <time className="w-[38px] text-center">13:04<br />28.01.2016</time>
      <button type="button" aria-label="Свернуть все окна" className="ml-[5px] h-full w-2 border-l border-[#6f94bb] bg-[#3c659a]" />
    </footer>
  );
}

export default function App() {
  return (
    <div className="h-screen bg-black px-[43px] font-['Open_Sans','Noto_Sans',sans-serif]">
      <div className="relative flex h-full flex-col overflow-hidden">
        <Wallpaper />
        <div className="relative min-h-0 flex-1">
          <div className="grid auto-rows-[65px] grid-cols-[44px_45px_44px] pt-1">
            <Shortcut label="Компьютер"><ComputerIcon /></Shortcut>
            <Shortcut label="Программы"><ChipIcon /></Shortcut>
            <Shortcut label="Игры"><StarIcon /></Shortcut>
            <div className="col-start-1"><Shortcut label="Handy Recovery 5..."><RarIcon /></Shortcut></div>
            <div className="col-start-1"><Shortcut label="Handy Recovery 5..."><RarIcon /></Shortcut></div>
            <div className="col-start-1"><Shortcut label="Handy Recovery 5..."><FolderIcon /></Shortcut></div>
            <div className="col-start-1">
              <Shortcut label="Handy Recovery 5.5">
                <span className="relative">
                  <Phoenix className="h-[28px] w-[28px]" />
                  <svg viewBox="0 0 9 9" className="absolute bottom-0 left-0 h-[9px] w-[9px]" aria-hidden="true">
                    <rect width="9" height="9" fill="#f4f7fa" />
                    <path d="M2 7.500Q2 4 5.500 3.500M3.500 2H7V5.500Z" stroke="#1d4fa5" strokeWidth="1.200" fill="#1d4fa5" fillOpacity=".5" />
                  </svg>
                </span>
              </Shortcut>
            </div>
          </div>
          <div className="absolute bottom-[23px] right-[4px] w-[44px]">
            <Shortcut label="Корзина"><BinIcon /></Shortcut>
          </div>
          <RecoveryWindow />
          <ExplorerWindow />
          <svg viewBox="0 0 8 12" className="absolute left-[599px] top-[43px] h-3 w-2" aria-hidden="true">
            <path d="M1 1V9.500L3 7.800L4.500 11L6 10.300L4.600 7.300H7.300Z" fill="#fff" stroke="#222" strokeWidth=".6" />
          </svg>
        </div>
        <Taskbar />
      </div>
    </div>
  );
}
